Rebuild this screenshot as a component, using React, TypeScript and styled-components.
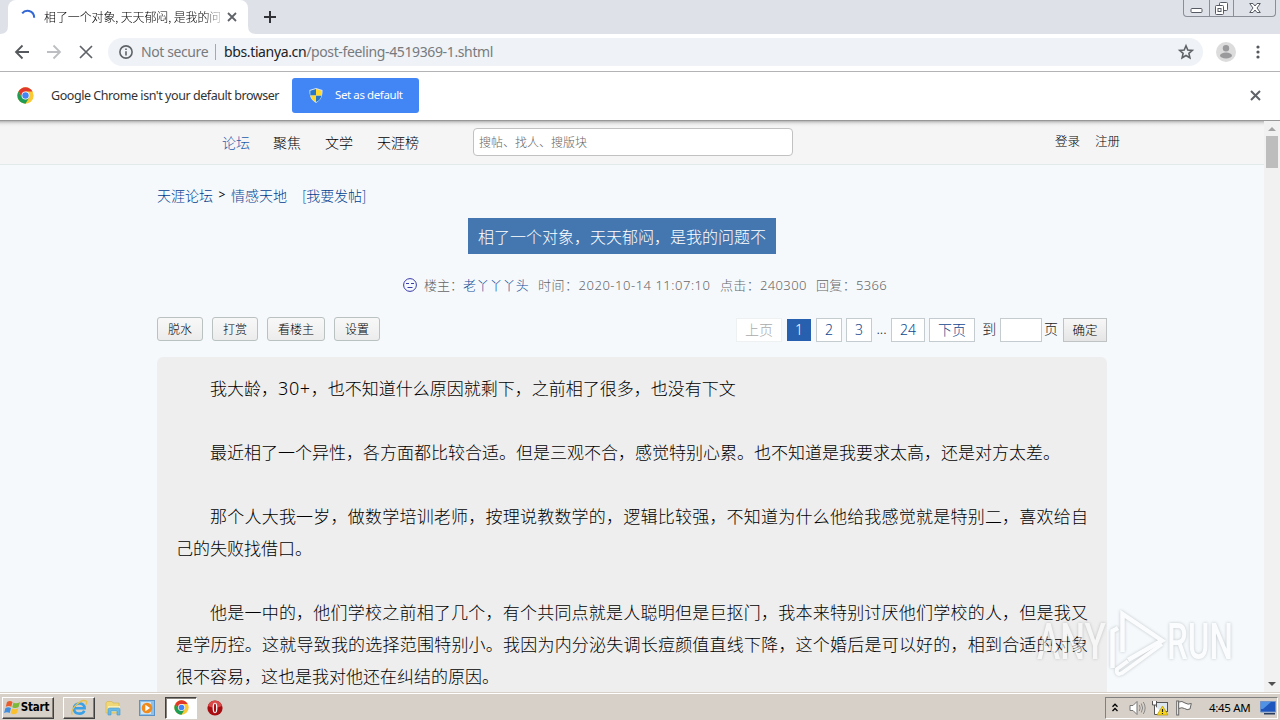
import React from "react";
import styled, { createGlobalStyle } from "styled-components";

const ui = `"Noto Sans", "Noto Sans CJK SC", sans-serif`;
const cjk = `"Noto Sans CJK SC", sans-serif`;

const Global = createGlobalStyle`
  * { box-sizing: border-box; }
  body { margin: 0; overflow: hidden; font-family: ${ui}; font-size: 13px; color: #333; }
  a { color: #104c98; text-decoration: none; }
`;

const Screen = styled.div`
  width: 1280px; height: 720px; display: flex; flex-direction: column;
  overflow: hidden; position: relative; background: #fff; white-space: nowrap;
`;

const TabStrip = styled.div`
  height: 34px; flex: none; background: #dee1e8; display: flex; justify-content: space-between;
`;
const TabGroup = styled.div`display: flex; align-items: flex-start;`;
const TabCurve = styled.svg`width: 8px; height: 34px; display: block;`;
const Tab = styled.div`
  width: 240px; height: 34px; background: #fff; border-radius: 8px 8px 0 0;
  display: flex; align-items: center; padding: 0 10px 1px 12px;
`;
const TabTitle = styled.div`
  width: 176px; margin-left: 8px; overflow: hidden; font: 300 12px/18px ${cjk}; color: #000;
  letter-spacing: -0.12px;
  mask-image: linear-gradient(90deg, #000 160px, transparent 182px);
`;
const Glyph = styled.svg<{ $ml?: number }>`
  display: block; flex: none; margin-left: ${(p) => p.$ml ?? 0}px; overflow: visible;
`;
const WindowButtons = styled.div`
  display: flex; width: 93px; height: 17px; margin-right: 4px;
  border: 1px solid #8a8e97; border-top: 0; border-radius: 0 0 4px 4px;
`;
const WindowButton = styled.div<{ $w: number }>`
  width: ${(p) => p.$w}px; display: flex; justify-content: center; align-items: center;
  & + & { border-left: 1px solid #8a8e97; }
`;

const Toolbar = styled.div`
  height: 38px; flex: none; border-bottom: 1px solid #b3b3b5; display: flex; align-items: center; padding: 0 0 1px 14px;
`;
const Omnibox = styled.div`
  width: 1095px; height: 28px; margin-left: 15px; border-radius: 14px; background: #eff2f6;
  display: flex; align-items: center; padding-left: 11px; color: #777a7e; font-size: 14px; line-height: 18px;
`;
const Secure = styled.span`width: 67px; margin: 0 0 1px 8px; letter-spacing: -0.4px;`;
const Divider = styled.i`width: 1px; height: 16px; margin: 0 8px 0 7px; background: #a5a8ac;`;
const Url = styled.span`
  width: 954px; letter-spacing: -0.37px; margin-bottom: 1px;
  b { font-weight: 400; color: #202124; }
`;
const InfoBar = styled.div`
  height: 49px; flex: none; border-bottom: 1px solid #989898; display: flex; align-items: center; padding: 0 0 1px 17px;
`;
const InfoText = styled.span`
  width: 229px; margin: 0 12px 0 17px; color: #333; font-size: 12.5px; line-height: 18px; letter-spacing: -0.44px;
`;
const DefaultButton = styled.div`
  width: 127px; height: 35px; border-radius: 3px; background: #4285f4; color: #fff;
  display: flex; align-items: center; padding-left: 17px; font-size: 11.5px; line-height: 18px; letter-spacing: -0.4px;
  span { margin: 0 0 1px 12px; }
`;

const Viewport = styled.div`
  height: 571px; flex: none; display: flex; background: #f5f9fc;
`;
const Page = styled.div`width: 1264px; overflow: hidden;`;
const SiteHeader = styled.div`
  height: 44px; display: flex; align-items: flex-start; padding-left: 222px;
  background: linear-gradient(#b4b4b4, #ddd 2px, #f0f0f0 4px, #f5f5f6 6px); border-bottom: 1px solid #e2e9ea;
`;
const Nav = styled.div`
  display: flex; gap: 24px; width: 251px; font: 300 14px/20px ${cjk}; padding-top: 11px; color: #000;
  a { color: #1f5cab; margin-right: -1px; }
`;
const Search = styled.div`
  width: 320px; height: 28px; margin-top: 7px; border: 1px solid #c1c1c1; border-radius: 4px; background: #fff;
  font: 300 12px/25px ${cjk}; color: #666; padding-left: 5px;
`;
const Account = styled.div`
  display: flex; gap: 15px; margin-left: 262px; padding-top: 11px; font: 300 12.5px/18px ${cjk}; color: #000;
`;
const Content = styled.div`width: 950px; margin-left: 157px;`;
const Crumbs = styled.div`
  display: flex; height: 20px; margin: 20px 0 0; font: 300 14px/20px ${cjk}; color: #000;
  a { color: #003f90; }
  i { font: 12px/20px ${ui}; width: 18px; text-align: center; }
  a:last-child { margin-left: 15px; letter-spacing: -0.1px; }
`;
const Title = styled.div`
  width: 308px; height: 36px; margin: 13px 0 0 311px; background: #4477b0; color: #fff;
  font: 300 16px/36px ${cjk}; text-align: center;
`;
const Meta = styled.div`
  display: flex; align-items: center; height: 20px; margin: 21px 0 0 246px; color: #666;
  font: 300 13px/20px ${ui};
`;
const MetaItem = styled.span<{ $w: number; $ls?: number; $pl?: number }>`
  width: ${(p) => p.$w}px; flex: none; letter-spacing: ${(p) => p.$ls ?? 0}px; padding-left: ${(p) => p.$pl ?? 0}px;
`;
const Controls = styled.div`display: flex; height: 24px; margin-top: 22px; align-items: flex-start;`;
const ToolButton = styled.div<{ $w?: number }>`
  width: ${(p) => p.$w ?? 46}px; height: 24px; margin-right: 9px; border: 1px solid #b9c1c1; border-radius: 3px;
  background: linear-gradient(#f8f8f8, #ececec); font: 300 12px/21px ${cjk}; color: #000; text-align: center;
`;
const Pager = styled.div`
  display: flex; margin: 1px 0 0 auto; color: #222; font: 300 14px/22px ${ui};
`;
const PageLink = styled.div<{ $w: number; $ml?: number; $state?: "on" | "off" }>`
  width: ${(p) => p.$w}px; height: 24px; margin-left: ${(p) => p.$ml ?? 4}px; text-align: center;
  border: 1px solid ${(p) => (p.$state === "off" ? "#edf1f2" : p.$state === "on" ? "#f5f9fc" : "#c5ccd0")};
  background: ${(p) => (p.$state === "on" ? "#2860b0" : "#fff")};
  color: ${(p) => (p.$state === "on" ? "#fff" : p.$state === "off" ? "#aaa" : "#104890")};
`;
const PagerText = styled.span<{ $w: number }>`width: ${(p) => p.$w}px; text-align: center;`;
const Confirm = styled.div`
  width: 44px; height: 24px; border: 1px solid #bfc3c3; background: linear-gradient(#f7f7f7, #e5e5e5);
  color: #000; font: 300 12.5px/22px ${cjk}; text-align: center; margin-left: 3px;
`;
const Post = styled.div`
  height: 340px; margin-top: 16px; padding: 15px 19px 0 19px; background: #eee; border-radius: 6px 6px 0 0;
  font: 300 17px/32px ${cjk}; color: #000; white-space: normal;
`;
const Paragraph = styled.p`margin: 0 0 32px; text-indent: 34px; text-align: justify;`;
const Latin = styled.span`font: 300 18px/20px ${ui}; letter-spacing: 0.6px;`;

const Scrollbar = styled.div`
  width: 16px; background: #f1f1f1; display: flex; flex-direction: column; align-items: center; padding: 6px 0 6px;
`;
const Thumb = styled.div`width: 12px; height: 32px; margin: 5px 0 auto; background: #bdbdbd;`;

const Taskbar = styled.div`
  height: 28px; flex: none; background: #d6d0c8; border-top: 1px solid #d6d0c8; box-shadow: inset 0 1px #fff;
  display: flex; align-items: center; padding: 3px 2px 1px;
`;
const TaskItem = styled.div<{ $w: number; $ml?: number; $look?: "up" | "down" }>`
  width: ${(p) => p.$w}px; height: 22px; margin-left: ${(p) => p.$ml ?? 0}px;
  display: flex; align-items: center; justify-content: center; border: 1px solid transparent;
  ${(p) => p.$look === "up" && "border-color: #fff #404040 #404040 #fff; box-shadow: inset -1px -1px #85817a;"}
  ${(p) => p.$look === "down" && "border-color: #404040 #fff #fff #404040; background: #fff; box-shadow: inset 1px 1px #85817a;"}
`;
const StartText = styled.span`
  font: bold 11.5px/14px "DejaVu Sans Condensed", sans-serif; color: #000; letter-spacing: -0.2px; margin: 0 3px 1px 0;
`;
const Tray = styled.div`
  width: 173px; height: 22px; margin-left: auto; border: 1px solid; border-color: #808080 #fff #fff #808080;
  display: flex; align-items: center; padding-left: 6px;
`;
const Clock = styled.span`width: 42px; margin: 0 9px 0 17px; font-size: 11.5px; line-height: 16px; color: #000; letter-spacing: -0.3px;`;
const Watermark = styled.svg`
  position: absolute; left: 1030px; top: 602px; width: 210px; height: 76px;
  filter: drop-shadow(0 0 1.5px rgba(70, 75, 80, 0.6)); opacity: 0.5;
`;

const Cross = ({ size, sw, ml, color = "#5f6368" }: { size: number; sw: number; ml?: number; color?: string }) => (
  <Glyph width={size} height={size} viewBox={`0 0 ${size} ${size}`} $ml={ml}>
    <path d={`M1 1L${size - 1} ${size - 1}M${size - 1} 1L1 ${size - 1}`} stroke={color} strokeWidth={sw} />
  </Glyph>
);

const ChromeLogo = ({ size }: { size: number }) => (
  <Glyph width={size} height={size} viewBox="0 0 48 48">
    <circle cx="24" cy="24" r="23" fill="#fbc934" />
    <path d="M4.1 12.5A23 23 0 0 1 43.9 12.5H24L14 29.5Z" fill="#e0392b" />
    <path d="M4.1 12.5A23 23 0 0 0 24 47L34 30L24 34.5L14 29.7Z" fill="#1f9d55" />
    <circle cx="24" cy="24" r="11" fill="#fff" />
    <circle cx="24" cy="24" r="9" fill="#4285f4" />
  </Glyph>
);

const Shield = () => (
  <Glyph width="14" height="15" viewBox="0 0 14 15">
    <path d="M7 0L13.5 2C13.7 8 12 12 7 15C2 12 .3 8 .5 2Z" fill="#d8e6f5" />
    <path d="M7 1V7.5H1.3L1.3 2.8Z M7 7.5H12.5C12 10.5 10 12.8 7 14Z" fill="#2876c8" />
    <path d="M7 1L12.7 2.8V7.5H7Z M1.4 7.5H7V14C4 12.8 2 10.5 1.4 7.5Z" fill="#ffd92e" />
  </Glyph>
);

const posts = [
  <>我大龄，<Latin>30+</Latin>，也不知道什么原因就剩下，之前相了很多，也没有下文</>,
  "最近相了一个异性，各方面都比较合适。但是三观不合，感觉特别心累。也不知道是我要求太高，还是对方太差。",
  "那个人大我一岁，做数学培训老师，按理说教数学的，逻辑比较强，不知道为什么他给我感觉就是特别二，喜欢给自己的失败找借口。",
  "他是一中的，他们学校之前相了几个，有个共同点就是人聪明但是巨抠门，我本来特别讨厌他们学校的人，但是我又是学历控。这就导致我的选择范围特别小。我因为内分泌失调长痘颜值直线下降，这个婚后是可以好的，相到合适的对象很不容易，这也是我对他还在纠结的原因。",
];

export default function App() {
  return (
    <Screen>
      <Global />
      <TabStrip>
        <TabGroup>
          <TabCurve viewBox="0 0 8 34"><path d="M8 26V34H0Q8 34 8 26Z" fill="#fff" /></TabCurve>
          <Tab>
            <Glyph width="16" height="16" viewBox="0 0 16 16">
              <path d="M2.2 4.4C5.2.4 13.9.6 14.2 8.8" fill="none" stroke="#3367d6" strokeWidth="2" />
            </Glyph>
            <TabTitle>相了一个对象, 天天郁闷, 是我的问题不</TabTitle>
            <Cross size={10} sw={1.8} ml={7} />
          </Tab>
          <TabCurve viewBox="0 0 8 34"><path d="M0 26V34H8Q0 34 0 26Z" fill="#fff" /></TabCurve>
          <Glyph width="12" height="34" viewBox="0 0 12 34" $ml={8}>
            <path d="M6 11V23M0 17H12" stroke="#303238" strokeWidth="2" />
          </Glyph>
        </TabGroup>
        <WindowButtons>
          <WindowButton $w={25}>
            <Glyph width="13" height="17" viewBox="0 0 13 17"><rect x="1" y="8.5" width="11" height="4" rx="1" fill="#fff" stroke="#565a63" /></Glyph>
          </WindowButton>
          <WindowButton $w={25}>
            <Glyph width="13" height="17" viewBox="0 0 13 17" fill="#fff" stroke="#565a63">
              <rect x="4.5" y="2.5" width="8" height="8" rx="1" /><rect x=".5" y="5.5" width="8" height="9" rx="1" /><rect x="3" y="8.5" width="3" height="3" />
            </Glyph>
          </WindowButton>
          <WindowButton $w={42}>
            <Glyph width="12" height="17" viewBox="0 0 12 17">
              <path d="M.7 3.5H4L6 6L8 3.5H11.3L8 8L11.3 12.5H8L6 10L4 12.5H.7L4 8Z" fill="#fff" stroke="#565a63" />
            </Glyph>
          </WindowButton>
        </WindowButtons>
      </TabStrip>

      <Toolbar>
        <Glyph width="16" height="16" viewBox="0 0 16 16" fill="none" stroke="#55585c" strokeWidth="1.8"><path d="M15 8H2M8.5 1.5L2 8L8.5 14.5" /></Glyph>
        <Glyph $ml={16} width="16" height="16" viewBox="0 0 16 16" fill="none" stroke="#bcbec1" strokeWidth="1.8"><path d="M1 8H14M7.5 1.5L14 8L7.5 14.5" /></Glyph>
        <Cross size={14} sw={1.7} ml={17} />
        <Omnibox>
          <Glyph width="14" height="14" viewBox="0 0 14 14" fill="none" stroke="#5f6368" strokeWidth="1.6"><circle cx="7" cy="7" r="6.1" /><path d="M7 6.2V10.5M7 3.4V5" /></Glyph>
          <Secure>Not secure</Secure>
          <Divider />
          <Url><b>bbs.tianya.cn</b>/post-feeling-4519369-1.shtml</Url>
          <Glyph width="16" height="16" viewBox="0 0 16 16"><path d="M8 1.8L9.8 6L14.3 6.4L10.9 9.4L11.9 13.8L8 11.5L4.1 13.8L5.1 9.4L1.7 6.4L6.2 6Z" fill="none" stroke="#5f6368" strokeWidth="1.6" /></Glyph>
        </Omnibox>
        <Glyph $ml={13} width="20" height="20" viewBox="0 0 20 20"><circle cx="10" cy="10" r="10" fill="#dcdcdd" /><circle cx="10" cy="6.2" r="3.2" fill="#9a9a9c" /><ellipse cx="10" cy="13.5" rx="6" ry="3" fill="#9a9a9c" /></Glyph>
        <Glyph $ml={20} width="4" height="14" viewBox="0 0 4 14" fill="#55585c"><circle cx="2" cy="2" r="1.6" /><circle cx="2" cy="7" r="1.6" /><circle cx="2" cy="12" r="1.6" /></Glyph>
      </Toolbar>

      <InfoBar>
        <ChromeLogo size={17} />
        <InfoText>Google Chrome isn't your default browser</InfoText>
        <DefaultButton><Shield /><span>Set as default</span></DefaultButton>
        <Cross size={11} sw={2} ml={831} />
      </InfoBar>

      <Viewport>
        <Page>
          <SiteHeader>
            <Nav><a>论坛</a><span>聚焦</span><span>文学</span><span>天涯榜</span></Nav>
            <Search>搜帖、找人、搜版块</Search>
            <Account><span>登录</span><span>注册</span></Account>
          </SiteHeader>
          <Content>
            <Crumbs><a>天涯论坛</a><i>&gt;</i><a>情感天地</a><a>[我要发帖]</a></Crumbs>
            <Title>相了一个对象，天天郁闷，是我的问题不</Title>
            <Meta>
              <Glyph width="14" height="14" viewBox="0 0 14 14" fill="none" stroke="#3a3aa8"><circle cx="7" cy="7" r="6.4" /><path d="M3 5.5H6M8 5.5H11M4.5 9.5H9.5" /></Glyph>
              <MetaItem $w={46} $pl={7}>楼主：</MetaItem>
              <MetaItem $w={75} $ls={0.2}><a>老丫丫丫头</a></MetaItem>
              <MetaItem $w={182} $ls={0.52}>时间：2020-10-14 11:07:10</MetaItem>
              <MetaItem $w={96} $ls={0.35}>点击：240300</MetaItem>
              <MetaItem $w={72} $ls={0.35}>回复：5366</MetaItem>
            </Meta>
            <Controls>
              <ToolButton>脱水</ToolButton><ToolButton>打赏</ToolButton><ToolButton $w={58}>看楼主</ToolButton><ToolButton>设置</ToolButton>
              <Pager>
                <PageLink $w={46} $state="off">上页</PageLink>
                <PageLink $w={26} $state="on">1</PageLink>
                <PageLink $w={26}>2</PageLink>
                <PageLink $w={26}>3</PageLink>
                <PagerText $w={19}>...</PagerText>
                <PageLink $w={34} $ml={0}>24</PageLink>
                <PageLink $w={46}>下页</PageLink>
                <PagerText $w={25}>&nbsp;到</PagerText>
                <PageLink $w={42} $ml={0} />
                <PagerText $w={18}>页</PagerText>
                <Confirm>确定</Confirm>
              </Pager>
            </Controls>
            <Post>{posts.map((t, i) => <Paragraph key={i}>{t}</Paragraph>)}</Post>
          </Content>
        </Page>
        <Scrollbar>
          <Glyph width="8" height="4" viewBox="0 0 8 4"><path d="M4 0L8 4H0Z" fill="#a3a3a3" /></Glyph>
          <Thumb />
          <Glyph width="8" height="4" viewBox="0 0 8 4"><path d="M0 0H8L4 4Z" fill="#505050" /></Glyph>
        </Scrollbar>
      </Viewport>

      <Taskbar>
        <TaskItem $w={52} $look="up">
          <Glyph width="17" height="15" viewBox="0 0 17 15">
            <path d="M3 2Q6 0 8.5 2L7.3 6.8Q5 5 1.8 6.8Z" fill="#e95d2c" /><path d="M9.5 2.5Q12.5 4.4 16 2L14.6 7Q11.5 9 8.3 7.2Z" fill="#7cb83a" />
            <path d="M1.5 8Q4.5 6.3 7 8L5.7 13Q3 11.3 0 13Z" fill="#3f8ee0" /><path d="M8 8.5Q11 10.3 14.3 8.3L13 13Q10 15.3 6.7 13.3Z" fill="#fbc02d" />
          </Glyph>
          <StartText>Start</StartText>
        </TaskItem>
        <TaskItem $w={32} $ml={9} $look="up">
          <Glyph width="18" height="17" viewBox="0 0 18 17" fill="none">
            <path d="M14.3 11.7C12.3 16.2 4 15.6 4 9.4C4 3.2 14.6 2.5 14.6 9.3H5" stroke="#3ba0e6" strokeWidth="2.6" />
            <path d="M2.5 15.5C-1.5 13 9.5-.5 16 1.8C17.6 2.6 16.3 5 15.7 6" stroke="#e8c14a" strokeWidth="1.3" />
          </Glyph>
        </TaskItem>
        <TaskItem $w={32} $ml={2}>
          <Glyph width="17" height="16" viewBox="0 0 17 16">
            <path d="M1 3L2 1.5H7L8 3H14V13H1Z" fill="#f0d878" stroke="#d5b755" strokeWidth=".7" /><path d="M3 6H15V12H3Z" fill="#faeeb0" />
            <path d="M3 15V9.5Q3 8 5 8H13.5Q15 8 15 9.5V15H12V11H6V15Z" fill="#69b9e6" stroke="#4a98c8" strokeWidth=".6" />
          </Glyph>
        </TaskItem>
        <TaskItem $w={32} $ml={2}>
          <Glyph width="16" height="16" viewBox="0 0 16 16"><rect x=".5" y=".5" width="15" height="15" fill="#8fc0e8" stroke="#5d92c7" /><rect x="2" y="2" width="10" height="12" fill="#cfe4f5" /><circle cx="8" cy="8" r="5.3" fill="#f18a1c" /><path d="M6.3 4.8L11 8L6.3 11.2Z" fill="#fff" /></Glyph>
        </TaskItem>
        <TaskItem $w={32} $ml={2} $look="down"><ChromeLogo size={15} /></TaskItem>
        <TaskItem $w={32} $ml={2}>
          <Glyph width="16" height="16" viewBox="0 0 16 16"><circle cx="8" cy="8" r="7.6" fill="#a80d12" /><path d="M1 6A7.3 7.3 0 0 1 15 6Q8 9 1 6Z" fill="#d84a48" /><ellipse cx="8" cy="8" rx="2.4" ry="5.2" fill="#fff" /><ellipse cx="8" cy="8" rx="1.1" ry="4.4" fill="#a80d12" /></Glyph>
        </TaskItem>
        <Tray>
          <Glyph width="6" height="9" viewBox="0 0 6 9" fill="none" stroke="#000" strokeWidth="1.3"><path d="M.5 3.7L3 1.2L5.5 3.7M.5 8L3 5.5L5.5 8" /></Glyph>
          <Glyph $ml={11} width="17" height="16" viewBox="0 0 17 16" fill="none" stroke="#777"><path d="M1 5.5H4L8 1.5V14.5L4 10.5H1Z" fill="#fff" /><path d="M10.3 5Q12 8 10.3 11M12.3 3.5Q15 8 12.3 12.5M14.3 2Q18 8 14.3 14" strokeWidth=".8" /></Glyph>
          <Glyph $ml={6} width="17" height="16" viewBox="0 0 17 16"><rect x="4.5" y="2.5" width="11" height="9" fill="#dce6ee" stroke="#555" /><path d="M.5 1V5H4.5V1M2.5 5V14.5H11" fill="#fff" stroke="#555" /><path d="M10.5 6L16 15H5Z" fill="#f7d51d" stroke="#b79600" strokeWidth=".7" /><path d="M10.5 9V12M10.5 13V14" stroke="#222" strokeWidth="1.2" /></Glyph>
          <Glyph $ml={7} width="16" height="16" viewBox="0 0 16 16" fill="#fff" stroke="#666"><rect x=".7" y="1" width="2" height="14" /><path d="M2.7 2Q6 .5 9 3Q12 5 15.3 3.5L14 9Q11 10.5 8.5 8.5Q6 7 2.7 8.5Z" /></Glyph>
          <Clock>4:45 AM</Clock>
          <Glyph width="16" height="14" viewBox="0 0 16 14"><path d="M.5.5H15.5V11H.5Z" fill="#1e56bd" stroke="#6f92c8" /><path d="M1 1H11L3 8H1Z" fill="#5093e4" /><path d="M4 12H15V13.5H4Z" fill="#2b3d5c" /></Glyph>
        </Tray>
      </Taskbar>

      <Watermark viewBox="0 0 210 76">
        <g fill="#fff" fontFamily="Roboto, sans-serif" fontWeight="500" fontSize="50">
          <text x="7" y="57" textLength="69" lengthAdjust="spacingAndGlyphs">ANY</text>
          <text x="137" y="57" textLength="66" lengthAdjust="spacingAndGlyphs">RUN</text>
        </g>
        <g fill="none" stroke="#fff" strokeWidth="4.5">
          <path d="M88 26L82.5 29V66M92.5 50V12L132 38.5L98 58" />
          <path d="M132 42L92 71Q86 74 87 67L98 59" strokeWidth="4" />
        </g>
      </Watermark>
    </Screen>
  );
}
